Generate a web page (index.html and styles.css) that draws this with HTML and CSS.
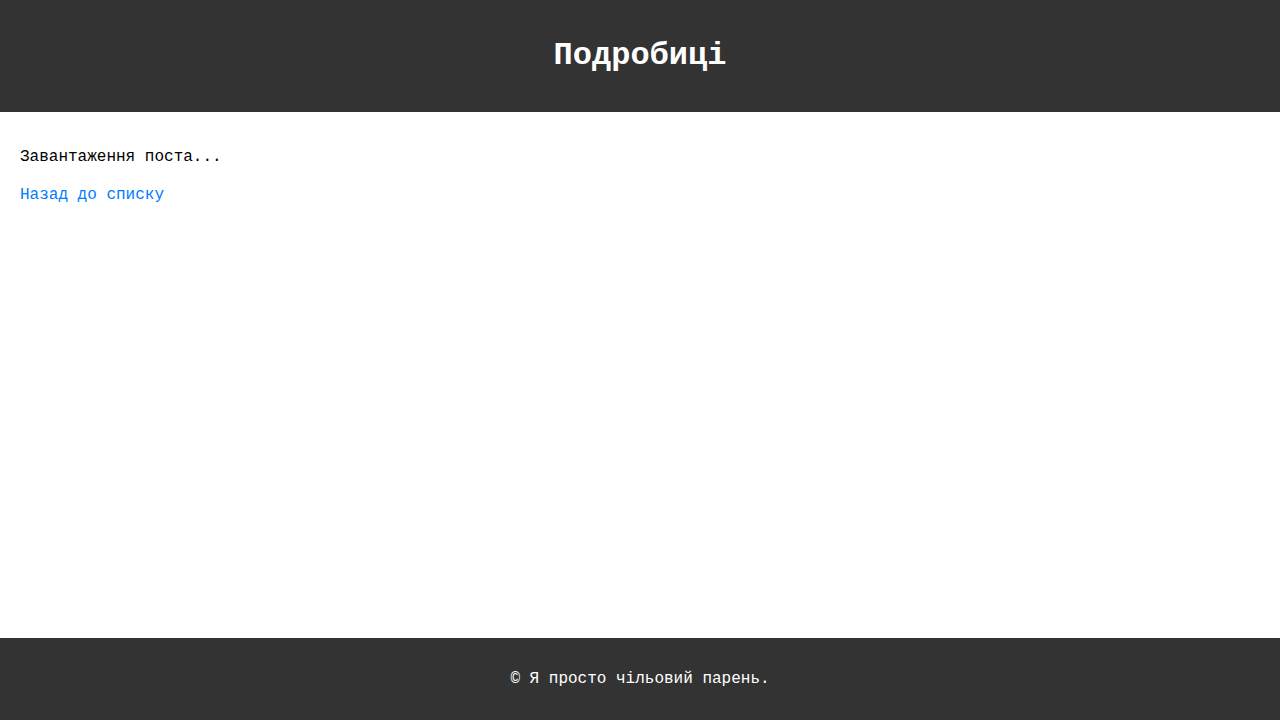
FILE: index.html
```html
<!DOCTYPE html>
<html lang="uk">
<head>
<meta charset="utf-8">
<title>Подробиці</title>
<link rel="stylesheet" href="styles.css">
</head>
<body>
<div class="page">
  <header class="site-header">
    <h1 class="site-title">Подробиці</h1>
  </header>
  <main class="content">
    <p class="status">Завантаження поста...</p>
    <a class="back-link" href="#">Назад до списку</a>
  </main>
  <footer class="site-footer">
    <p class="copyright">© Я просто чільовий парень.</p>
  </footer>
</div>
</body>
</html>
```
FILE: styles.css
```css
html, body {
  margin: 0;
  padding: 0;
}
body {
  font-family: "Courier New", Courier, "Nimbus Mono PS", "FreeMono", "Liberation Mono", monospace;
  font-size: 16px;
  color: #000;
  background: #fff;
}
.page {
  min-height: 100vh;
  display: flex;
  flex-direction: column;
}
.site-header {
  background: #333;
  color: #fff;
  padding: 38px 0;
  text-align: center;
}
.site-title {
  margin: 0;
  font-size: 32px;
  line-height: 36px;
  font-weight: bold;
}
.content {
  flex: 1;
  padding: 36px 20px 20px;
  display: flex;
  flex-direction: column;
  align-items: flex-start;
  gap: 20px;
}
.status {
  margin: 0;
  line-height: 18px;
}
.back-link {
  color: #007bff;
  text-decoration: none;
  line-height: 18px;
}
.site-footer {
  background: #333;
  color: #fff;
  text-align: center;
  padding: 32px 0;
}
.copyright {
  margin: 0;
  line-height: 18px;
}
```
